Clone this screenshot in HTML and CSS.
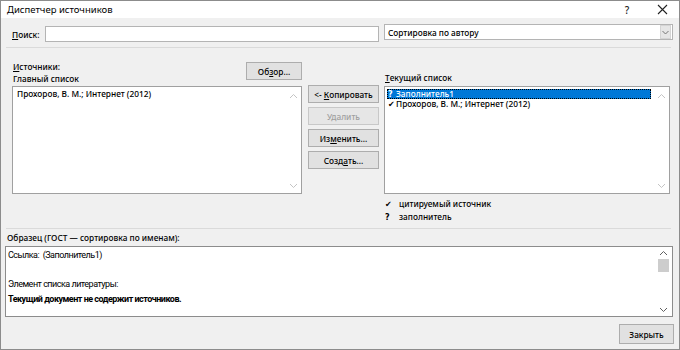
FILE: index.html
```html
<!DOCTYPE html>
<html lang="ru">
<head>
    <meta charset="UTF-8">
    <title>Диспетчер источников</title>
    <link rel="stylesheet" href="styles.css">
</head>
<body>
    <div class="window">
        <div class="titlebar">
            <div class="title">Диспетчер источников</div>
            <div class="title-btn help">?</div>
            <div class="title-btn close">
                <svg width="11" height="11" viewBox="0 0 11 11"><path d="M1 1L10 10M10 1L1 10" stroke="#222" stroke-width="1.1" fill="none"/></svg>
            </div>
        </div>
        <div class="body">
            <div class="search-row">
                <label class="search-label"><u>П</u>оиск:</label>
                <div class="input"></div>
                <div class="select">
                    <span class="select-text">Сортировка по автору</span>
                    <span class="select-arrow">
                        <svg width="7" height="5" viewBox="0 0 7 5"><path d="M0.5 1L3.5 4L6.5 1" stroke="#777" fill="none"/></svg>
                    </span>
                </div>
            </div>
            <div class="sep"></div>

            <div class="sources">
                <div class="col-main">
                    <div class="col-head">
                        <div class="labels">
                            <div><u>И</u>сточники:</div>
                            <div>Главный список</div>
                        </div>
                        <div class="btn browse">Об<u>з</u>ор...</div>
                    </div>
                    <div class="listbox">
                        <div class="items">
                            <div class="item">Прохоров, В. М.; Интернет (2012)</div>
                        </div>
                        <div class="scroll">
                            <svg width="9" height="6" viewBox="0 0 9 6"><path d="M1 5L4.5 1.5L8 5" stroke="#c4c4c4" fill="none"/></svg>
                            <svg width="9" height="6" viewBox="0 0 9 6"><path d="M1 1L4.5 4.5L8 1" stroke="#c4c4c4" fill="none"/></svg>
                        </div>
                    </div>
                </div>

                <div class="col-buttons">
                    <div class="btn">&lt;-&nbsp;<u>К</u>опировать</div>
                    <div class="btn disabled">Удалить</div>
                    <div class="btn">Из<u>м</u>енить...</div>
                    <div class="btn">Созд<u>а</u>ть...</div>
                </div>

                <div class="col-current">
                    <div class="col-label"><u>Т</u>екущий список</div>
                    <div class="listbox current">
                        <div class="items">
                            <div class="item selected"><span class="mark">?</span>Заполнитель1</div>
                            <div class="item"><span class="mark">✔</span>Прохоров, В. М.; Интернет (2012)</div>
                        </div>
                        <div class="scroll">
                            <svg width="9" height="6" viewBox="0 0 9 6"><path d="M1 5L4.5 1.5L8 5" stroke="#c4c4c4" fill="none"/></svg>
                            <svg width="9" height="6" viewBox="0 0 9 6"><path d="M1 1L4.5 4.5L8 1" stroke="#c4c4c4" fill="none"/></svg>
                        </div>
                    </div>
                    <div class="legend">
                        <div><span class="mark">✔</span>цитируемый источник</div>
                        <div><span class="mark">?</span>заполнитель</div>
                    </div>
                </div>
            </div>
            <div class="sep"></div>

            <div class="sample-label">Образец (ГОСТ — сортировка по именам):</div>
            <div class="preview">
                <div class="preview-text">
                    <div>Ссылка:&nbsp; (Заполнитель1)</div>
                    <div class="gap"></div>
                    <div>Элемент списка литературы:</div>
                    <div class="bold">Текущий документ не содержит источников.</div>
                </div>
                <div class="scroll preview-scroll">
                    <svg width="9" height="6" viewBox="0 0 9 6"><path d="M1 5L4.5 1.5L8 5" stroke="#606060" fill="none"/></svg>
                    <div class="thumb"></div>
                    <div class="track"></div>
                    <svg width="9" height="6" viewBox="0 0 9 6"><path d="M1 1L4.5 4.5L8 1" stroke="#606060" fill="none"/></svg>
                </div>
            </div>

            <div class="footer">
                <div class="btn close-btn">Закрыть</div>
            </div>
        </div>
    </div>
</body>
</html>
```

FILE: styles.css
```css
* {
    margin: 0;
    padding: 0;
    box-sizing: border-box;
}
body {
    font-family: "Noto Sans", "Open Sans", sans-serif;
    font-size: 8.3px;
    font-weight: 500;
    color: #000;
    background: #fff;
}
u {
    text-decoration: underline;
    text-underline-offset: 1px;
}
.window {
    width: 680px;
    height: 350px;
    border: 1px solid #8c8c8c;
    background: #f0f0f0;
    display: flex;
    flex-direction: column;
}
.titlebar {
    height: 21px;
    background: #fff;
    display: flex;
    align-items: center;
}
.title {
    flex: 1;
    padding-left: 6px;
    font-size: 9.5px;
    font-weight: 400;
}
.title-btn {
    width: 34px;
    text-align: center;
    font-size: 10px;
    color: #222;
}
.help {
    margin-right: 1px;
}
.close {
    display: flex;
    justify-content: center;
    align-items: center;
    width: 34px;
}

.body {
    flex: 1;
    display: flex;
    flex-direction: column;
    padding: 7px 6px 5px 3px;
}

/* поиск */
.search-row {
    display: flex;
    align-items: flex-start;
    height: 19px;
}
.search-label {
    width: 41px;
    padding-left: 8px;
    line-height: 19px;
}
.input {
    width: 334px;
    height: 16px;
    margin-top: 1px;
    background: #fff;
    border: 1px solid #b4b4b4;
}
.select {
    width: 289px;
    height: 16px;
    margin-left: 5px;
    margin-top: -1px;
    background: #fff;
    border: 1px solid #b4b4b4;
    display: flex;
    align-items: center;
}
.select-text {
    flex: 1;
    padding-left: 3px;
}
.select-arrow {
    width: 11px;
    height: 14px;
    margin-right: 1px;
    background: #e6e6e6;
    border: 1px solid #d4d4d4;
    display: flex;
    justify-content: center;
    align-items: center;
}

.sep {
    height: 1px;
    background: #dadada;
    margin: 3px 2px 0 2px;
}

/* источники */
.sources {
    display: flex;
    padding-left: 8px;
    height: 177px;
}
.col-main {
    width: 290px;
    display: flex;
    flex-direction: column;
}
.col-head {
    display: flex;
    justify-content: space-between;
    align-items: flex-end;
    height: 38px;
}
.labels {
    line-height: 12px;
    padding-left: 1px;
    padding-bottom: 1px;
}
.btn {
    height: 18px;
    background: #e1e1e1;
    border: 1px solid #adadad;
    display: flex;
    justify-content: center;
    align-items: center;
    white-space: nowrap;
}
.browse {
    width: 56px;
    margin-bottom: 6px;
}
.listbox {
    height: 108px;
    background: #fff;
    border: 1px solid #a0a0a0;
    display: flex;
}
.items {
    flex: 1;
    padding: 2px 2px;
}
.item {
    height: 10px;
    line-height: 10px;
    padding-left: 2px;
    white-space: nowrap;
}
.scroll {
    width: 16px;
    display: flex;
    flex-direction: column;
    justify-content: space-between;
    align-items: center;
    padding: 6px 0 4px 0;
}

.col-buttons {
    width: 71px;
    margin-left: 6px;
    padding-top: 37px;
    display: flex;
    flex-direction: column;
    gap: 4px;
}
.disabled {
    color: #a0a0a0;
    background: #e6e6e6;
    border-color: #c8c8c8;
}

.col-current {
    width: 286px;
    margin-left: 5px;
    display: flex;
    flex-direction: column;
}
.col-label {
    height: 38px;
    display: flex;
    align-items: flex-end;
    padding-left: 1px;
    padding-bottom: 3px;
}
.current .item {
    padding-left: 1px;
}
.selected {
    background: #0078d7;
    color: #fff;
    outline: 1px dotted #000;
    outline-offset: -1px;
}
.mark {
    display: inline-block;
    width: 8px;
    font-weight: bold;
    font-family: "DejaVu Sans", sans-serif;
    font-size: 8px;
}
.legend {
    padding: 4px 0 0 1px;
    line-height: 12px;
}
.legend .mark {
    width: 14px;
}

/* образец */
.sample-label {
    padding: 3px 0 0 3px;
    height: 17px;
}
.preview {
    height: 71px;
    margin-left: 1px;
    background: #fff;
    border: 1px solid #8c8c8c;
    display: flex;
}
.preview-text {
    flex: 1;
    padding: 1px 0 0 2px;
    font-family: "Roboto", "Noto Sans", sans-serif;
    font-weight: 400;
    font-size: 9px;
    letter-spacing: -0.5px;
    line-height: 15px;
}
.gap {
    height: 14px;
}
.bold {
    font-weight: bold;
}
.preview-scroll {
    width: 13px;
    padding: 3px 0 3px 0;
    margin-right: 2px;
    justify-content: flex-start;
    gap: 3px;
}
.thumb {
    width: 11px;
    height: 13px;
    background: #cdcdcd;
}
.track {
    flex: 1;
}

.footer {
    display: flex;
    justify-content: flex-end;
    padding-top: 7px;
}
.close-btn {
    width: 55px;
    height: 20px;
    margin-right: -1px;
}
```
